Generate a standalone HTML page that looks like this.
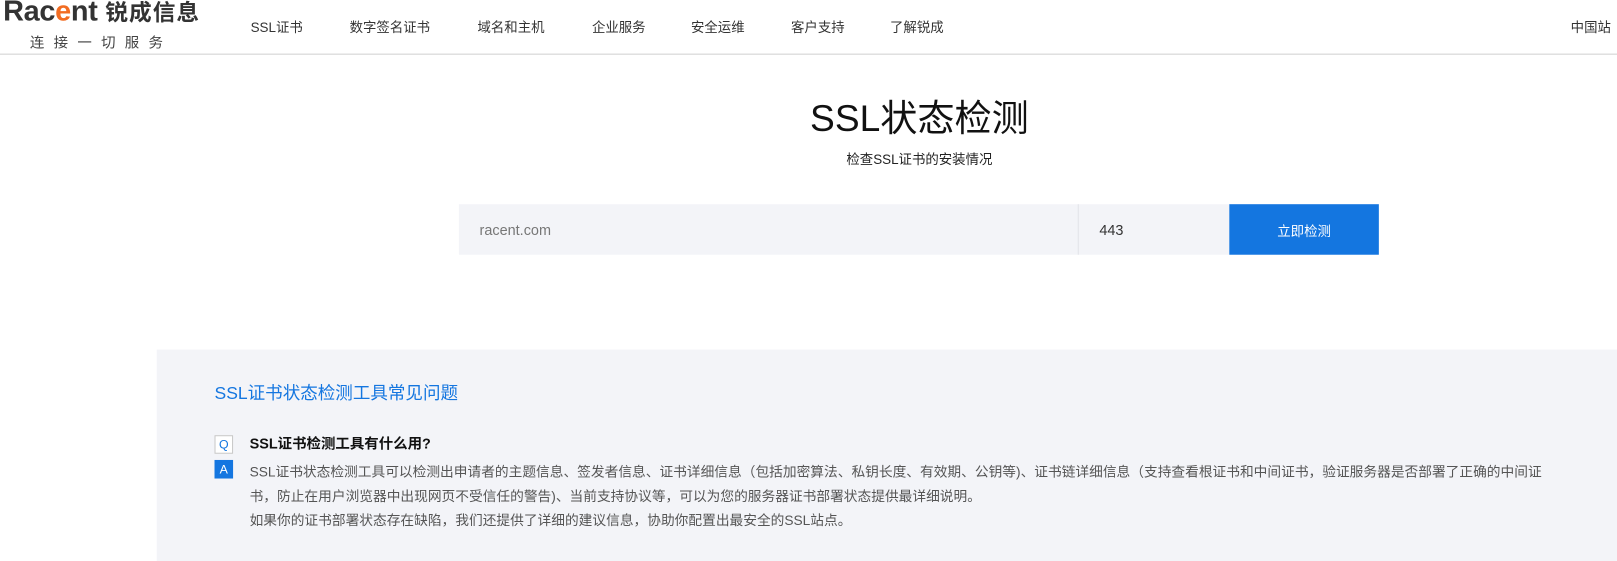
<!DOCTYPE html>
<html><head><meta charset="utf-8"><style>
*{margin:0;padding:0;box-sizing:border-box}
html,body{width:1617px;height:561px;overflow:hidden;background:#fff}
body{font-family:"Liberation Sans","Noto Sans CJK SC",sans-serif;color:#222;position:relative}
#w{position:absolute;left:0;top:0;width:1568px;height:545px;transform:scale(1.0313);transform-origin:0 0}
.abs{position:absolute;white-space:nowrap}
.hdr{position:absolute;left:0;top:0;width:1568px;height:53px;border-bottom:1px solid #d0d0d0}
.nav{font-size:13px;color:#333;top:16px}
</style></head><body><div id="w">
<div class="hdr"></div>
<div class="abs" style="left:3px;top:-5px;font-size:28px;font-weight:bold;color:#333;letter-spacing:-0.3px">Rac<span style="color:#f26c22">e</span>nt <span style="font-size:22px;letter-spacing:1px">锐成信息</span></div>
<div class="abs" style="left:29px;top:31px;font-size:14px;color:#444;letter-spacing:9px">连接一切服务</div>
<div class="abs nav" style="left:243px">SSL证书</div>
<div class="abs nav" style="left:339px">数字签名证书</div>
<div class="abs nav" style="left:463px">域名和主机</div>
<div class="abs nav" style="left:574px">企业服务</div>
<div class="abs nav" style="left:670px">安全运维</div>
<div class="abs nav" style="left:767px">客户支持</div>
<div class="abs nav" style="left:863px">了解锐成</div>
<div class="abs nav" style="left:1523px">中国站</div>

<div class="abs" style="left:0;width:1783px;top:86px;text-align:center;font-size:36px;color:#111">SSL状态检测</div>
<div class="abs" style="left:0;width:1783px;top:144px;text-align:center;font-size:13px;color:#222">检查SSL证书的安装情况</div>

<div class="abs" style="left:445px;top:198px;width:600px;height:49px;background:#f3f4f8"></div>
<div class="abs" style="left:465px;top:215px;font-size:14px;color:#777">racent.com</div>
<div class="abs" style="left:1045px;top:198px;width:147px;height:49px;background:#f3f4f8;border-left:1px solid #e2e3e8"></div>
<div class="abs" style="left:1066px;top:215px;font-size:14px;color:#333">443</div>
<div class="abs" style="left:1192px;top:198px;width:145px;height:49px;background:#1476e0;color:#fff;font-size:13px;text-align:center;line-height:53px">立即检测</div>

<div class="abs" style="left:152px;top:339px;width:1420px;height:210px;background:#f3f4f8"></div>
<div class="abs" style="left:208px;top:367px;font-size:17px;color:#1476e0">SSL证书状态检测工具常见问题</div>
<div class="abs" style="left:208px;top:422px;width:18px;height:18px;border:1px solid #c8c8c8;background:#fff;color:#1476e0;font-size:12px;text-align:center;line-height:16px">Q</div>
<div class="abs" style="left:242px;top:420px;font-size:14px;font-weight:bold;color:#111">SSL证书检测工具有什么用?</div>
<div class="abs" style="left:208px;top:446px;width:18px;height:18px;background:#1476e0;color:#fff;font-size:12px;text-align:center;line-height:18px">A</div>
<div class="abs" style="left:242px;top:446px;width:1262px;white-space:normal;font-size:13.3px;line-height:23.5px;color:#555">SSL证书状态检测工具可以检测出申请者的主题信息、签发者信息、证书详细信息（包括加密算法、私钥长度、有效期、公钥等)、证书链详细信息（支持查看根证书和中间证书，验证服务器是否部署了正确的中间证书，防止在用户浏览器中出现网页不受信任的警告)、当前支持协议等，可以为您的服务器证书部署状态提供最详细说明。<br>如果你的证书部署状态存在缺陷，我们还提供了详细的建议信息，协助你配置出最安全的SSL站点。</div>
</div></body></html>
